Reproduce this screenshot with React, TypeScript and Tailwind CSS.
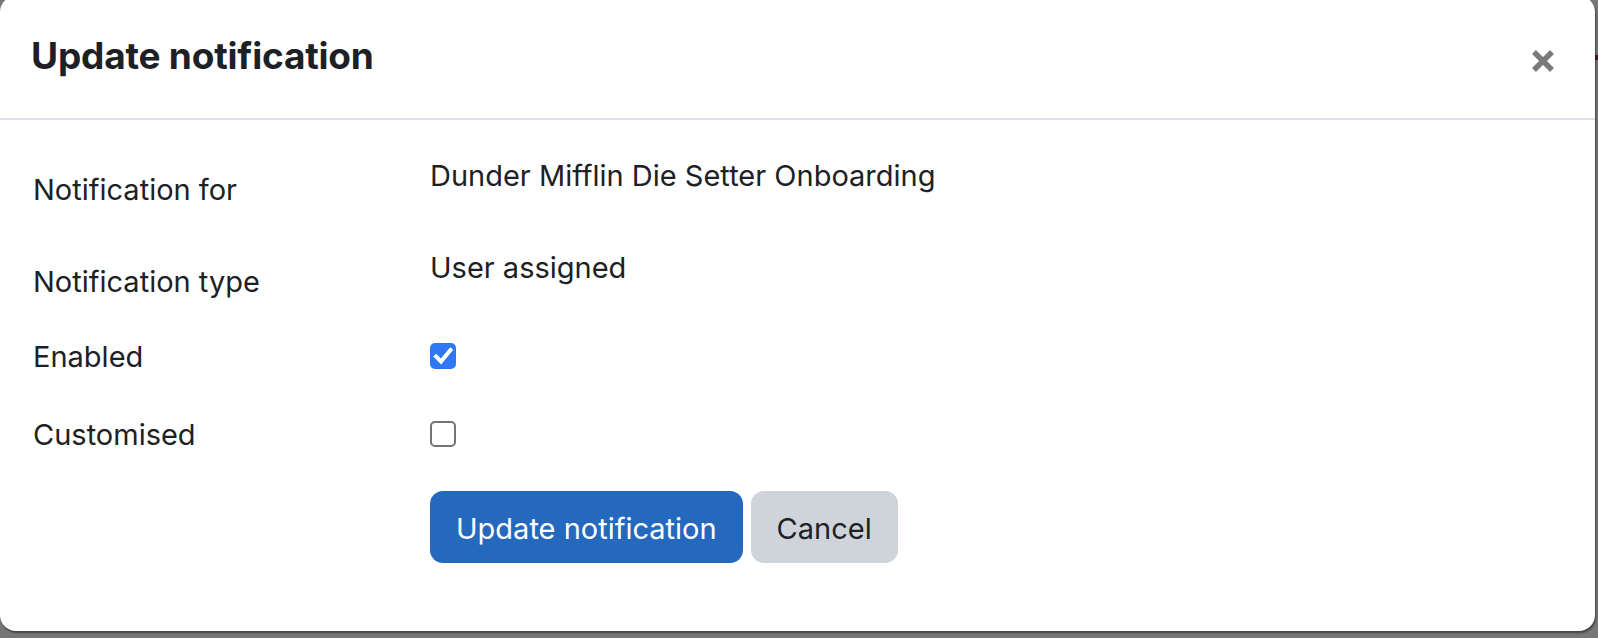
import React from "react";

function CheckBox({ checked }: { checked: boolean }) {
  if (checked) {
    return (
      <div className="w-[26px] h-[26px] rounded-[5px] bg-[#2f78f5] flex items-center justify-center">
        <svg width="22" height="22" viewBox="0 0 22 22">
          <path d="M4 11.5 L9 16.5 L18.5 5" fill="none" stroke="#ffffff" strokeWidth="4" strokeLinecap="square" strokeLinejoin="miter" />
        </svg>
      </div>
    );
  }
  return <div className="w-[26px] h-[26px] rounded-[5px] border-2 border-[#737373] bg-white" />;
}

export default function App() {
  return (
    <div className="relative w-[1598px] h-[638px] bg-[#777777] overflow-hidden" style={{ fontFamily: "Inter, 'Noto Sans', sans-serif" }}>
      <div className="absolute right-0 top-[55px] w-[3px] h-[5px] bg-[#5a1a1e]" />
      <div className="relative w-[1595px] h-[635px] -mt-[4px] bg-white rounded-[16px] shadow-[1px_2px_2px_rgba(0,0,0,0.45)] flex flex-col text-[#1d2125]">
        <div className="h-[124px] shrink-0 border-b-2 border-[#dee2e6] flex items-center justify-between pl-[31px] pr-[40px]">
          <h5 className="text-[37px] font-bold leading-[44px] tracking-[-0.2px] -mt-[2px]">Update notification</h5>
          <button className="w-[24px] h-[24px] flex items-center justify-center mt-[7px]">
            <svg width="24" height="24" viewBox="0 0 24 24">
              <path d="M3 3 L21 21 M21 3 L3 21" stroke="#7a7a7a" strokeWidth="5.5" strokeLinecap="butt" />
            </svg>
          </button>
        </div>
        <div className="pl-[33px] pt-[34px] text-[29px] leading-[44px]">
          <div className="flex h-[92px]">
            <div className="w-[397px] mt-[14px]">Notification for</div>
            <div>Dunder Mifflin Die Setter Onboarding</div>
          </div>
          <div className="flex h-[89px]">
            <div className="w-[397px] mt-[14px]">Notification type</div>
            <div>User assigned</div>
          </div>
          <div className="flex h-[78px]">
            <div className="w-[397px]">Enabled</div>
            <div className="mt-[8px]"><CheckBox checked /></div>
          </div>
          <div className="flex h-[78px]">
            <div className="w-[397px]">Customised</div>
            <div className="mt-[8px]"><CheckBox checked={false} /></div>
          </div>
          <div className="flex pl-[397px] gap-[8px]">
            <button className="h-[72px] px-[26px] pt-[3px] rounded-[13px] bg-[#2469bd] text-white text-[29px] leading-[44px]">Update notification</button>
            <button className="h-[72px] px-[26px] pt-[3px] rounded-[13px] bg-[#ced4da] text-[#1d2125] text-[29px] leading-[44px]">Cancel</button>
          </div>
        </div>
      </div>
    </div>
  );
}
